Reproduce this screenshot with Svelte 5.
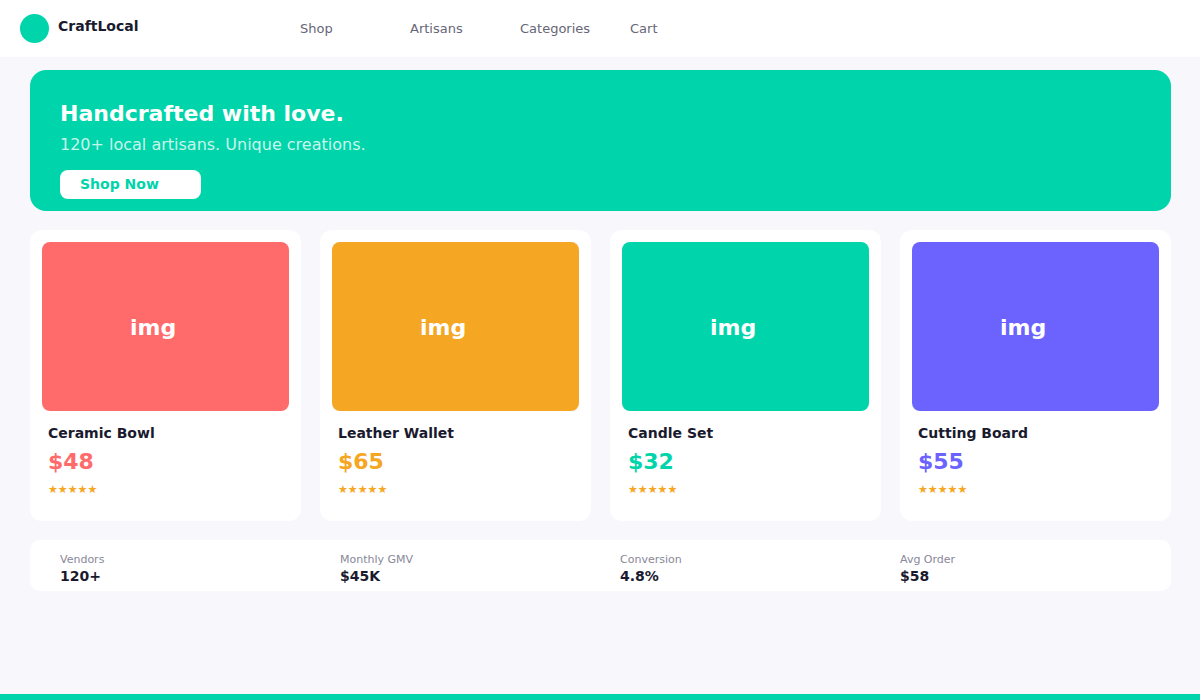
<script>
	const links = [
		{ label: 'Shop', width: 110 },
		{ label: 'Artisans', width: 110 },
		{ label: 'Categories', width: 110 },
		{ label: 'Cart', width: 60 }
	];

	const products = [
		{ name: 'Ceramic Bowl', price: '$48', color: '#ff6b6b' },
		{ name: 'Leather Wallet', price: '$65', color: '#f5a623' },
		{ name: 'Candle Set', price: '$32', color: '#00d4aa' },
		{ name: 'Cutting Board', price: '$55', color: '#6c63ff' }
	];

	const stats = [
		{ label: 'Vendors', value: '120+' },
		{ label: 'Monthly GMV', value: '$45K' },
		{ label: 'Conversion', value: '4.8%' },
		{ label: 'Avg Order', value: '$58' }
	];
</script>

<div class="page">
	<header class="nav">
		<div class="brand">
			<span class="logo"></span>
			<span class="brand-name">CraftLocal</span>
		</div>
		<nav class="links">
			{#each links as link}
				<span class="link" style:width="{link.width}px">{link.label}</span>
			{/each}
		</nav>
	</header>

	<main class="content">
		<section class="hero">
			<h1>Handcrafted with love.</h1>
			<p>120+ local artisans. Unique creations.</p>
			<button class="cta">Shop Now</button>
		</section>

		<section class="products">
			{#each products as product}
				<article class="card">
					<div class="thumb" style:background={product.color}>img</div>
					<h2>{product.name}</h2>
					<div class="price" style:color={product.color}>{product.price}</div>
					<div class="stars">★★★★★</div>
				</article>
			{/each}
		</section>

		<section class="stats">
			{#each stats as stat}
				<div class="stat">
					<span class="stat-label">{stat.label}</span>
					<span class="stat-value">{stat.value}</span>
				</div>
			{/each}
		</section>
	</main>

	<div class="bottom-bar"></div>
</div>

<style>
	:global(body) {
		background: #f8f8fc;
	}

	.page {
		display: flex;
		flex-direction: column;
		height: 700px;
		overflow: hidden;
		font-family: 'DejaVu Sans', sans-serif;
		color: #1a1a2e;
	}

	.nav {
		display: flex;
		height: 57px;
		flex-shrink: 0;
		background: #fff;
		padding-left: 20px;
	}

	.brand {
		display: flex;
		width: 280px;
		align-items: flex-start;
		gap: 9px;
		padding-top: 14px;
	}

	.logo {
		width: 29px;
		height: 29px;
		border-radius: 50%;
		background: #00d4aa;
	}

	.brand-name {
		font-size: 14px;
		font-weight: 700;
		line-height: 17px;
		margin-top: 4px;
	}

	.links {
		display: flex;
		padding-top: 21px;
	}

	.link {
		font-size: 13px;
		line-height: 16px;
		color: #666677;
	}

	.content {
		display: flex;
		flex-direction: column;
		padding: 13px 29px 0 30px;
	}

	.hero {
		box-sizing: border-box;
		height: 141px;
		padding: 30px 30px 0;
		border-radius: 16px;
		background: #00d4aa;
		color: #fff;
	}

	.hero h1 {
		margin: 0;
		font-size: 22px;
		font-weight: 700;
		line-height: 27px;
	}

	.hero p {
		margin: 8px 0 0;
		font-size: 16px;
		line-height: 19px;
		color: rgba(255, 255, 255, 0.8);
	}

	.cta {
		display: block;
		box-sizing: border-box;
		width: 141px;
		height: 29px;
		margin-top: 16px;
		padding: 0 0 2px 20px;
		border: none;
		border-radius: 8px;
		background: #fff;
		color: #00d4aa;
		font-family: inherit;
		font-size: 14px;
		font-weight: 700;
		text-align: left;
	}

	.products {
		display: grid;
		grid-template-columns: repeat(4, 271px);
		gap: 19px;
		margin-top: 19px;
	}

	.card {
		box-sizing: border-box;
		height: 291px;
		padding: 12px;
		border-radius: 12px;
		background: #fff;
	}

	.thumb {
		box-sizing: border-box;
		height: 169px;
		padding: 72px 0 0 88px;
		border-radius: 8px;
		color: #fff;
		font-size: 22px;
		font-weight: 700;
		line-height: 27px;
	}

	.card h2 {
		margin: 14px 0 0 6px;
		font-size: 14px;
		font-weight: 700;
		line-height: 17px;
	}

	.price {
		margin: 6px 0 0 6px;
		font-size: 22px;
		font-weight: 700;
		line-height: 27px;
	}

	.stars {
		margin: 8px 0 0 6px;
		font-size: 11px;
		line-height: 13px;
		color: #f5a623;
	}

	.stats {
		display: grid;
		grid-template-columns: repeat(4, 280px);
		box-sizing: border-box;
		height: 51px;
		margin-top: 19px;
		padding: 13px 30px 0;
		border-radius: 10px;
		background: #fff;
	}

	.stat {
		display: flex;
		flex-direction: column;
	}

	.stat-label {
		font-size: 11px;
		line-height: 13px;
		color: #888899;
	}

	.stat-value {
		margin-top: 2px;
		font-size: 14px;
		font-weight: 700;
		line-height: 17px;
	}

	.bottom-bar {
		height: 6px;
		margin-top: auto;
		flex-shrink: 0;
		background: #00d4aa;
	}
</style>
